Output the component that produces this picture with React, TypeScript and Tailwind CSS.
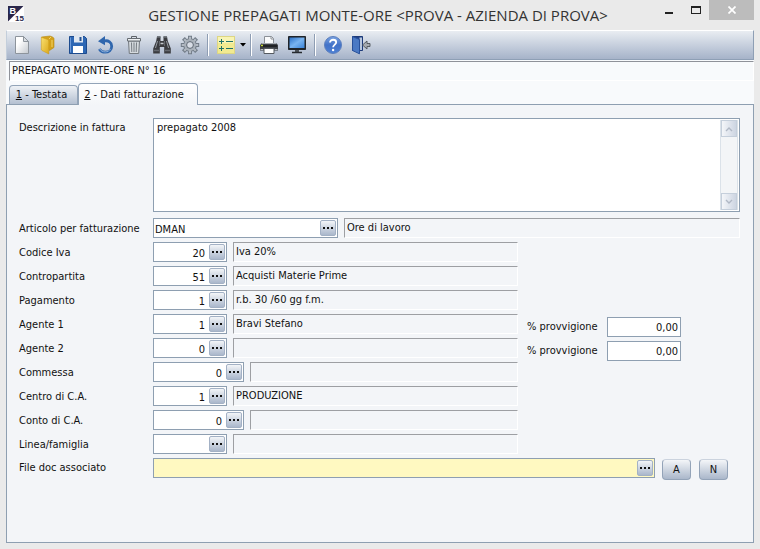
import type { ReactNode } from "react";

function Dots() {
  return (
    <svg width="12" height="4" viewBox="0 0 12 4" aria-hidden="true">
      <path d="M1 1h2v2H1zM5 1h2v2H5zM9 1h2v2H9z" fill="#111" />
    </svg>
  );
}

function Svg({ children }: { children: ReactNode }) {
  return (
    <svg width="20" height="20" viewBox="0 0 20 20" aria-hidden="true">
      {children}
    </svg>
  );
}

const NewIcon = () => (
  <Svg>
    <defs>
      <linearGradient id="doc" x1="0" y1="0" x2="1" y2="1">
        <stop offset="0.3" stopColor="#fff" />
        <stop offset="1" stopColor="#c3c8ce" />
      </linearGradient>
    </defs>
    <path d="M3.5 1.5h8l5 5v12h-13z" fill="url(#doc)" stroke="#8d949c" />
    <path d="M11.5 1.5v5h5z" fill="#d9dde2" stroke="#8d949c" strokeLinejoin="round" />
  </Svg>
);

const OpenIcon = () => (
  <Svg>
    <defs>
      <linearGradient id="fold" x1="0" y1="0" x2="1" y2="1">
        <stop offset="0" stopColor="#f9e070" />
        <stop offset="1" stopColor="#dca81a" />
      </linearGradient>
    </defs>
    <path d="M1.500 2L10 1l2.500 1c1 .5 1.500 1 1.500 2v8.500l-4.500 3z" fill="#d3a11c" stroke="#b58a14" strokeWidth="0.600" />
    <path d="M9 4l2-2M12 5v7" stroke="#f3d466" />
    <path d="M1.300 2.300l6.500 2.200c.7.3 1 .8 1 1.500V19L2 15.500c-.5-.3-.7-.7-.7-1.200z" fill="url(#fold)" stroke="#c8950f" strokeWidth="0.500" />
  </Svg>
);

const SaveIcon = () => (
  <Svg>
    <path d="M1.500 1.500h15l2 2v15h-17z" fill="#2d67b4" stroke="#1d4b8e" />
    <path d="M6 1h9v6.500H6z" fill="#dfe7f1" />
    <path d="M11.500 2h2v4h-2z" fill="#27528f" />
    <path d="M5 11h10v7H5z" fill="#fff" />
    <path d="M2.500 2.500v15" stroke="#6d9bdb" />
  </Svg>
);

const UndoIcon = () => (
  <Svg>
    <path d="M8 6c4.500-1 7.700 1.500 7.700 5.200 0 3.700-3 6-6.400 6-2.800 0-4.800-1.200-6-3.200" fill="none" stroke="#2f66ad" strokeWidth="2.800" />
    <path d="M3.800 14c1 1.800 3 2.900 5.500 2.900 2.200 0 4.200-1.200 5.200-3" fill="none" stroke="#8fb2dc" strokeWidth="1" />
    <path d="M2 6.200L9 1v9.200z" fill="#2f66ad" />
  </Svg>
);

const TrashIcon = () => (
  <Svg>
    <path d="M7.500 3V1.500h5V3" fill="none" stroke="#5d6368" />
    <path d="M4.500 6h11l-.8 12.500H5.300z" fill="#d5dade" stroke="#73797f" />
    <path d="M3.500 3.500h13V6h-13z" fill="#eceff1" stroke="#666c72" />
    <path d="M7.500 7.500l.3 9.500M10 7.500V17M12.500 7.500l-.3 9.500" stroke="#757c83" />
  </Svg>
);

const BinocularsIcon = () => (
  <Svg>
    <path d="M5 1.500h3.500V6h3V1.500H15l.8 4.500 3 7.500v5h-6.600V12H7.800v6.500H1.200v-5l3-7.500z" fill="#3b3c40" />
    <path d="M5 2h3.500M11.500 2H15" stroke="#6c7177" strokeWidth="1.500" />
    <path d="M5.500 6l-2 7M14.500 6l2 7" stroke="#969ba2" />
    <path d="M7.500 6v5M12.500 6v5" stroke="#63676d" />
    <path d="M2 15.500h5M13 15.500h5" stroke="#65696f" strokeWidth="1.500" />
    <path d="M8.500 8.500h3" stroke="#c2c6cb" strokeWidth="1.500" />
  </Svg>
);

const GearIcon = () => (
  <Svg>
    <g stroke="#727c88" strokeWidth="4">
      <path d="M10 .8v18.400M.8 10h18.400M3.400 3.400l13.200 13.200M16.600 3.400L3.400 16.600" />
    </g>
    <circle cx="10" cy="10" r="6.800" fill="#727c88" />
    <g stroke="#b3bac3" strokeWidth="2.200">
      <path d="M10 1.800v16.400M1.800 10h16.400M4.200 4.200l11.600 11.600M15.800 4.200L4.200 15.800" />
    </g>
    <circle cx="10" cy="10" r="5.900" fill="#a9b1ba" />
    <circle cx="10" cy="10" r="3.400" fill="#d8dde6" stroke="#5f6874" />
  </Svg>
);

const ListIcon = () => (
  <Svg>
    <rect x="1.500" y="1.500" width="17" height="17" fill="#f1ea90" stroke="#ddd684" />
    <path d="M2 2h16v6H2z" fill="#f8f4b4" />
    <path d="M3 6.500h5M5.500 4v5M3 13.500h5M5.500 11v5" stroke="#1f7267" strokeWidth="1" />
    <path d="M10 6.500h7M10 13.500h7" stroke="#1f7267" strokeWidth="1" />
  </Svg>
);

const PrinterIcon = () => (
  <Svg>
    <path d="M5.500 9V1.500h7l2 2V9" fill="#fafbfc" stroke="#8b9097" />
    <path d="M12 1.500V4h2.500" fill="none" stroke="#8b9097" />
    <path d="M3 8h14l2 2v5.500H1V10z" fill="#3c4045" />
    <path d="M3 8.500h14" stroke="#a3a8ae" />
    <path d="M2 11h16" stroke="#17191c" strokeWidth="1.500" />
    <path d="M2 10.500h2" stroke="#c9dc36" strokeWidth="1.500" />
    <path d="M1.500 14.500h3M15.500 14.500h3" stroke="#b9bdc2" />
    <path d="M5 13.500h10v5H5z" fill="#fff" stroke="#555a60" />
  </Svg>
);

const MonitorIcon = () => (
  <Svg>
    <defs>
      <linearGradient id="scr" x1="0" y1="0" x2="1" y2="1">
        <stop offset="0" stopColor="#2a70c8" />
        <stop offset="0.5" stopColor="#79b4f0" />
        <stop offset="1" stopColor="#3a83d8" />
      </linearGradient>
    </defs>
    <rect x="1" y="1" width="18" height="14" rx="0.800" fill="#202429" />
    <rect x="2.500" y="2.500" width="15" height="10.500" fill="url(#scr)" />
    <path d="M8 15h4v2H8z" fill="#4c5157" />
    <path d="M5 17.500h10" stroke="#25292e" strokeWidth="1.500" />
  </Svg>
);

const HelpIcon = () => (
  <Svg>
    <defs>
      <linearGradient id="hlp" x1="0" y1="0" x2="0" y2="1">
        <stop offset="0" stopColor="#7aa3e2" />
        <stop offset="0.5" stopColor="#4272c8" />
        <stop offset="1" stopColor="#4d80d4" />
      </linearGradient>
    </defs>
    <circle cx="10" cy="10" r="8.500" fill="url(#hlp)" stroke="#5c7fbd" />
    <path d="M7 7.600c0-3.900 6.200-3.600 6.200-.3 0 2.300-3.100 2.400-3.100 5" fill="none" stroke="#fff" strokeWidth="1.800" />
    <circle cx="10.100" cy="15" r="1.200" fill="#fff" />
  </Svg>
);

const ExitIcon = () => (
  <Svg>
    <path d="M1.500 1.500h10v14h-10z" fill="#20428a" stroke="#1d3a78" />
    <path d="M8.500 2.500H11V15H8.500z" fill="#b7c6dd" />
    <path d="M1.500 1.500l7 3v14.300l-7-3.300z" fill="#4a79c4" stroke="#27509a" />
    <path d="M19 8.500h-3V6L11.500 10l4.500 4v-2.500h3z" fill="#a6abb1" stroke="#4d5258" strokeWidth="0.900" />
  </Svg>
);

function Tool({ name, children }: { name: string; children: ReactNode }) {
  return (
    <button type="button" aria-label={name} className="flex h-7 w-7 items-center justify-center">
      {children}
    </button>
  );
}

function Separator() {
  return (
    <div className="flex w-2 justify-center">
      <div className="h-[22px] w-0.5 border-l border-[#8e9db3] bg-white" />
    </div>
  );
}

function Lookup({ name }: { name: string }) {
  return (
    <button
      type="button"
      aria-label={`Cerca ${name}`}
      className="mr-px flex h-4 w-4 shrink-0 items-center justify-center rounded-xs border border-[#a3b1c5] bg-linear-to-b from-[#f3f5f8] to-[#aab7cb]"
    >
      <Dots />
    </button>
  );
}

type CodeProps = {
  id: string;
  name: string;
  value: string;
  box: string;
  text?: string;
  fill?: string;
};

function CodeField({ id, name, value, box, text = "text-right", fill = "bg-white" }: CodeProps) {
  return (
    <div className={`flex h-5 items-center border border-[#8e9fb1] ${box} ${fill}`}>
      <input
        id={id}
        defaultValue={value}
        className={`h-[18px] w-full min-w-0 flex-1 bg-transparent pt-0.5 pr-1 pl-px outline-none ${text}`}
      />
      <Lookup name={name} />
    </div>
  );
}

function Description({ name, value }: { name: string; value: string }) {
  return (
    <input
      readOnly
      aria-label={`Descrizione ${name}`}
      defaultValue={value}
      className="h-5 w-full min-w-0 flex-1 border border-t-[#9d9fa3] border-r-white border-b-white border-l-[#9d9fa3] bg-transparent px-0.5 pb-0.5 outline-none"
    />
  );
}

type Row = { id: string; name: string; value: string; text: string; wide?: boolean; rate?: boolean };

const rows: Row[] = [
  { id: "iva", name: "Codice Iva", value: "20", text: "Iva 20%" },
  { id: "contropartita", name: "Contropartita", value: "51", text: "Acquisti Materie Prime" },
  { id: "pagamento", name: "Pagamento", value: "1", text: "r.b. 30 /60 gg f.m." },
  { id: "agente1", name: "Agente 1", value: "1", text: "Bravi Stefano", rate: true },
  { id: "agente2", name: "Agente 2", value: "0", text: "", rate: true },
  { id: "commessa", name: "Commessa", value: "0", text: "", wide: true },
  { id: "centro", name: "Centro di C.A.", value: "1", text: "PRODUZIONE" },
  { id: "conto", name: "Conto di C.A.", value: "0", text: "", wide: true },
  { id: "linea", name: "Linea/famiglia", value: "", text: "" },
];

function FieldRow({ row }: { row: Row }) {
  return (
    <div className="grid grid-cols-[134px_minmax(0,365px)_1fr] items-center">
      <label htmlFor={row.id} className="pt-0.5">
        {row.name}
      </label>
      <div className="flex gap-1.5">
        <CodeField
          id={row.id}
          name={row.name}
          value={row.value}
          box={row.wide ? "w-[91px] shrink-0" : "w-[74px] shrink-0"}
        />
        <Description name={row.name} value={row.text} />
      </div>
      {row.rate && (
        <div className="mt-[3px] -mb-[3px] flex items-center pl-[9px]">
          <label htmlFor={`${row.id}-rate`} className="w-20 whitespace-nowrap">
            % provvigione
          </label>
          <input
            id={`${row.id}-rate`}
            defaultValue="0,00"
            className="h-5 w-[74px] border border-[#8e9fb1] bg-white px-0.5 text-right outline-none"
          />
        </div>
      )}
    </div>
  );
}

function ScrollButton({ name, d }: { name: string; d: string }) {
  return (
    <button
      type="button"
      aria-label={name}
      className="flex h-[17px] w-4 items-center justify-center border border-[#c5cfdb] bg-linear-to-r from-[#f4f6f9] to-[#cdd5e2]"
    >
      <svg width="8" height="6" viewBox="0 0 8 6" aria-hidden="true">
        <path d={d} fill="none" stroke="#b0b8c5" strokeWidth="1.400" />
      </svg>
    </button>
  );
}

const actionButton =
  "h-[21px] w-[29px] rounded border border-[#93a3b8] border-t-[#cbd3de] bg-linear-to-b from-[#f4f6f9] to-[#aab7ca] text-center";

export default function App() {
  return (
    <div className="flex min-h-screen flex-col bg-[#eaeaea] px-1.5 pb-1.5 font-['DejaVu_Sans_Condensed','DejaVu_Sans',sans-serif] text-[11px] leading-4 text-[#111]">
      <header className="grid h-[30px] grid-cols-[1fr_auto_1fr]">
        <svg className="mt-1.5 ml-0.5" width="16" height="16" viewBox="0 0 16 16" aria-hidden="true">
          <path d="M0 0h16v16H0z" fill="#fff" />
          <path d="M0 0h15.500L0 15.500z" fill="#29264a" />
          <text x="1.500" y="8" fontFamily="Liberation Sans" fontSize="9" fontWeight="700" fill="#fff">
            B
          </text>
          <text x="7" y="15" fontFamily="Liberation Sans" fontSize="8" fontWeight="700" fill="#29264a">
            15
          </text>
        </svg>
        <h1 className="mr-1 font-['Open_Sans','Noto_Sans',sans-serif] text-[15px] leading-[30px] whitespace-nowrap text-[#333]">
          GESTIONE PREPAGATI MONTE-ORE &lt;PROVA - AZIENDA DI PROVA&gt;
        </h1>
        <div className="flex h-5 justify-end">
          <button type="button" aria-label="Riduci a icona" className="flex w-7 items-end justify-center pb-1.5">
            <span className="h-0.5 w-2 bg-[#222]" />
          </button>
          <button type="button" aria-label="Ingrandisci" className="flex w-[26px] items-center justify-center">
            <span className="h-2 w-2.5 border border-t-2 border-[#222]" />
          </button>
          <button type="button" aria-label="Chiudi" className="flex w-[45px] items-center justify-center bg-[#bcbcbc]">
            <svg width="8" height="8" viewBox="0 0 8 8" aria-hidden="true">
              <path d="M0.500 0.500l7 7M7.500 0.500l-7 7" stroke="#fff" strokeWidth="1.700" />
            </svg>
          </button>
        </div>
      </header>

      <main className="flex flex-1 flex-col bg-[#f8fafc]">
        <div
          role="toolbar"
          aria-label="Comandi"
          className="flex h-[30px] items-center border border-t-white border-r-[#8e9fb5] border-b-[#8e9fb5] border-l-[#c3cedb] bg-linear-to-b from-[#e9edf2] to-[#a6b3c9] pl-px"
        >
          <Tool name="Nuovo"><NewIcon /></Tool>
          <Tool name="Apri"><OpenIcon /></Tool>
          <Tool name="Salva"><SaveIcon /></Tool>
          <Tool name="Ripristina"><UndoIcon /></Tool>
          <Tool name="Elimina"><TrashIcon /></Tool>
          <Tool name="Cerca"><BinocularsIcon /></Tool>
          <Tool name="Impostazioni"><GearIcon /></Tool>
          <Separator />
          <Tool name="Elenco"><ListIcon /></Tool>
          <button type="button" aria-label="Altre opzioni" className="flex h-7 w-[7px] items-center">
            <svg width="6" height="4" viewBox="0 0 6 4" aria-hidden="true">
              <path d="M0 0h6L3 3.500z" fill="#000" />
            </svg>
          </button>
          <Separator />
          <Tool name="Stampa"><PrinterIcon /></Tool>
          <Tool name="Anteprima"><MonitorIcon /></Tool>
          <Separator />
          <Tool name="Guida"><HelpIcon /></Tool>
          <Tool name="Esci"><ExitIcon /></Tool>
        </div>

        <input
          readOnly
          aria-label="Prepagato"
          defaultValue="PREPAGATO MONTE-ORE N° 16"
          className="mt-px ml-[3px] h-5 border border-t-[#8f9299] border-r-white border-b-white border-l-[#8f9299] bg-transparent px-0.5 pb-0.5 outline-none"
        />

        <div role="tablist" className="mt-0.5 flex items-end pl-[3px]">
          <button
            type="button"
            role="tab"
            aria-selected="false"
            className="h-[19px] w-[69px] rounded-t border border-b-0 border-[#93a4b8] bg-linear-to-b from-[#eef1f5] to-[#b4c0d1] pr-1 text-center"
          >
            <u>1</u> - Testata
          </button>
          <button
            type="button"
            role="tab"
            aria-selected="true"
            className="z-10 -mb-px h-[22px] w-[120px] rounded-t border border-b-0 border-[#93a4b8] bg-linear-to-b from-white to-[#f3f5f8] pr-2 text-center"
          >
            <u>2</u> - Dati fatturazione
          </button>
        </div>

        <form
          className="flex flex-1 flex-col gap-1 border border-[#8e9fb1] bg-[#f3f5f8] pt-[13px] pr-[13px] pl-3"
          onSubmit={(event) => event.preventDefault()}
        >
          <div className="mb-0.5 flex">
            <label htmlFor="descrizione" className="w-[134px] shrink-0 pt-0.5">
              Descrizione in fattura
            </label>
            <div className="flex h-[94px] flex-1 border border-[#8e9fb1] bg-white">
              <textarea
                id="descrizione"
                defaultValue="prepagato 2008"
                className="h-full min-w-0 flex-1 resize-none px-[3px] pt-px outline-none"
              />
              <div className="m-px flex flex-col justify-between border-x border-[#dbe2e9] bg-[#f3f5f7]">
                <ScrollButton name="Scorri su" d="M1 5l3-3 3 3" />
                <ScrollButton name="Scorri giù" d="M1 1l3 3 3-3" />
              </div>
            </div>
          </div>

          <div className="flex items-center">
            <label htmlFor="articolo" className="w-[134px] shrink-0 pt-0.5 whitespace-nowrap">
              Articolo per fatturazione
            </label>
            <div className="flex flex-1 gap-1.5">
              <CodeField id="articolo" name="Articolo" value="DMAN" box="w-[185px] shrink-0" text="text-left" />
              <Description name="Articolo" value="Ore di lavoro" />
            </div>
          </div>

          {rows.map((row) => (
            <FieldRow key={row.id} row={row} />
          ))}

          <div className="flex items-start pr-3">
            <label htmlFor="file" className="w-[134px] shrink-0 pt-0.5">
              File doc associato
            </label>
            <CodeField id="file" name="File" value="" box="flex-1" text="text-left" fill="bg-[#fff9c1]" />
            <div className="flex gap-2 pt-px pl-[7px]">
              <button type="button" className={actionButton}>
                A
              </button>
              <button type="button" className={actionButton}>
                N
              </button>
            </div>
          </div>
        </form>
      </main>
    </div>
  );
}
